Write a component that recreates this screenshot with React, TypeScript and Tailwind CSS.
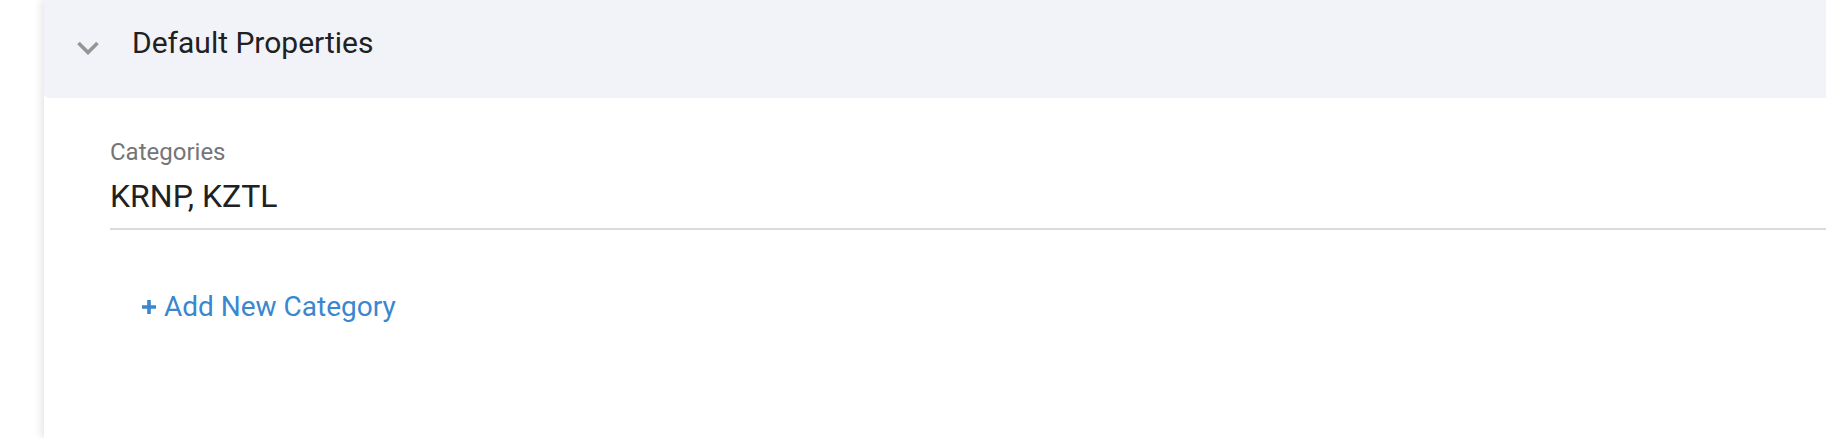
import React from 'react';

const App: React.FC = () => {
  return (
    <div className="flex h-[438px] w-full overflow-hidden bg-white font-['Roboto',sans-serif]">
      {/* left gutter */}
      <div className="w-[44px] shrink-0" />

      {/* Panel */}
      <div className="flex flex-1 flex-col bg-white shadow-[-3px_0_8px_rgba(0,0,0,0.10)]">
        {/* Header */}
        <div className="flex h-[98px] items-center rounded-bl-[5px] bg-[#f2f3f8] pr-px pb-[12px]">
          <svg className="ml-[33px] mt-[9px] h-[14px] w-[22px] text-[#959595]" viewBox="0 0 22 14" fill="none">
            <path d="M1.5 2 11 11.5 20.5 2" stroke="currentColor" strokeWidth="3.6" />
          </svg>
          <h2 className="ml-[33px] text-[30px] leading-[36px] text-[#212121]">Default Properties</h2>
        </div>

        {/* Body */}
        <div className="pl-[66px] pt-[40px]">
          <label className="block text-[24px] leading-[28px] text-[#757575]">Categories</label>
          <div className="mt-[12px] border-b-2 border-[#dadada] pb-[14px] text-[32px] leading-[36px] text-[#212121]">
            KRNP, KZTL
          </div>

          <button className="mt-[61px] ml-[32px] flex items-center gap-[8px] text-[28px] leading-[32px] text-[#3a87d0]">
            <svg className="h-[14px] w-[14px]" viewBox="0 0 14 14" fill="none">
              <path d="M7 0v14M0 7h14" stroke="currentColor" strokeWidth="3.6" />
            </svg>
            Add New Category
          </button>
        </div>
      </div>
    </div>
  );
};

export default App;
